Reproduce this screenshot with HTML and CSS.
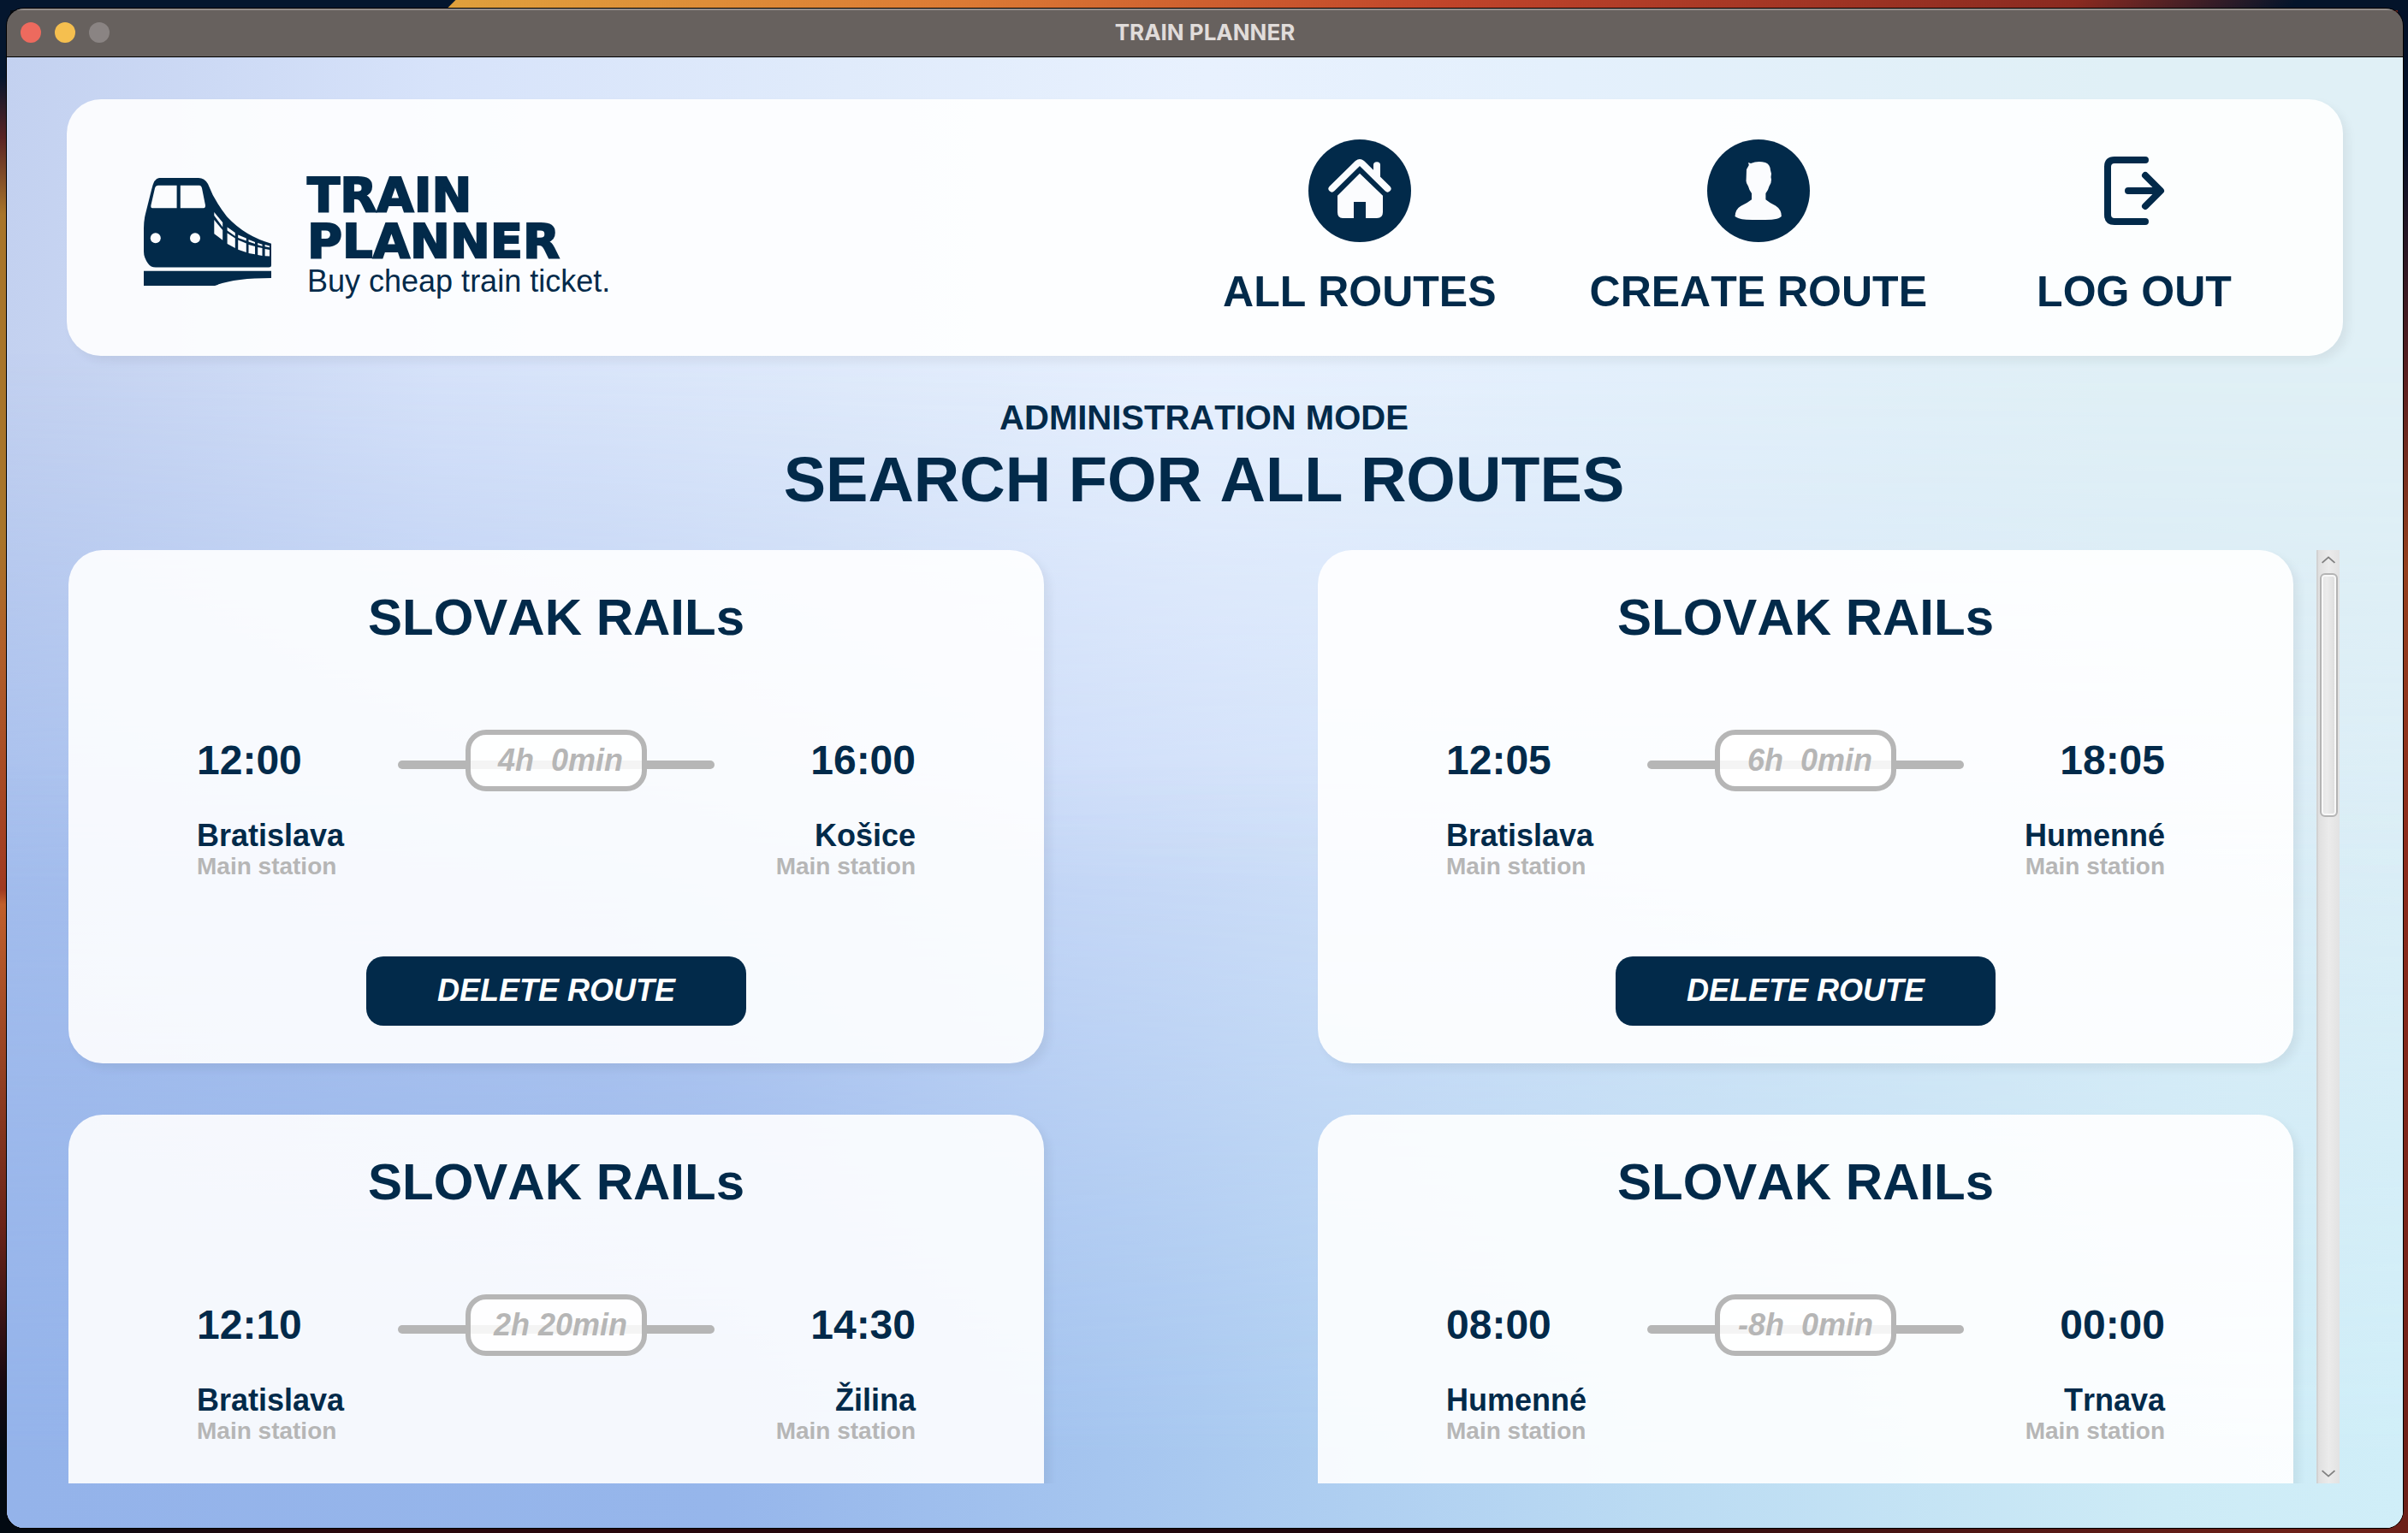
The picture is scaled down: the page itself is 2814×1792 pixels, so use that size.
FILE: index.html
```html
<!DOCTYPE html>
<html lang="en">
<head>
<meta charset="utf-8">
<meta name="viewport" content="width=device-width, initial-scale=1">
<title>TRAIN PLANNER</title>
<link rel="stylesheet" href="styles.css">
</head>
<body>
<div class="window">
  <div class="titlebar">
    <div class="lights">
      <button class="light light-close" aria-label="Close"></button>
      <button class="light light-minimise" aria-label="Minimise"></button>
      <button class="light light-zoom" aria-label="Zoom" disabled></button>
    </div>
    <span class="titlebar-text">TRAIN PLANNER</span>
  </div>

  <div class="app">
    <header class="header">
      <div class="brand">
        <svg class="brand-logo" viewBox="0 0 149 148" aria-hidden="true">
          <g transform="translate(0 7)">
            <path class="ink" d="M18 0H64Q71 0 75 7Q82 26 97 45Q118 68 149 76.700V102Q149 104.500 146 104.500H14Q8 104.500 5 100Q0 93 0 86V59Q0 50 2 42L9 14Q12 0 18 0Z"/>
            <path class="ink" d="M0 108.700H149V117Q105 117 83 126H0Z"/>
            <path class="gap" d="M17 8.700H38.600V35.300H10Q8 35.300 8.400 32L13 12Q14 8.700 17 8.700ZM42.800 8.700H65Q67 8.700 68 12L72 32Q72 35.300 70 35.300H42.800Z"/>
            <circle class="gap" cx="13.800" cy="70.300" r="6"/>
            <circle class="gap" cx="60" cy="70.300" r="6"/>
            <path class="gap" d="M82.300 40L92.200 52V57.500L82.300 44ZM82.300 49L92.200 61V72.700L82.300 65.300ZM97.600 57.500L106.800 64V68L97.600 61.500ZM97.600 64.500L106.800 70.500V82L97.600 77ZM110.200 66.500L119.800 70.500V73.500L110.200 70ZM110.200 72.500L119.800 76.500V87L110.200 83.700ZM122.500 72L130 75V77L122.500 74.500ZM122.500 78L130 80V89.300L122.500 88ZM133.200 76L138.500 77.700V79.700L133.200 78.300ZM133.200 81L138.500 82V91L133.200 90ZM141.600 78L147 79.500V81.300L141.600 80.300ZM141.600 83L147 84V91.500L141.600 91.300Z"/>
          </g>
        </svg>
        <div class="brand-text">
          <div class="brand-name">TRAIN<br>PLANNER</div>
          <div class="brand-tagline">Buy cheap train ticket.</div>
        </div>
      </div>

      <nav class="nav">
        <a class="nav-item" href="#routes">
          <svg class="nav-icon" viewBox="0 0 120 120" aria-hidden="true">
            <circle class="ink" cx="60" cy="60" r="60"/>
            <path class="gap-line" d="M27.500 57.500L57.500 28Q60 26 62.500 28L92.500 57.500"/>
            <path class="gap" d="M76 36V30Q76 26.300 80 26.300T84 30V48L76 40Z"/>
            <path class="gap" d="M60 39.700L87 65.700V85Q87 92 80 92H67V73H53V92H40Q34 92 34 85V65.700Z"/>
          </svg>
          <span class="nav-label">ALL ROUTES</span>
        </a>
        <a class="nav-item" href="#create">
          <svg class="nav-icon" viewBox="0 0 120 120" aria-hidden="true">
            <circle class="ink" cx="60" cy="60" r="60"/>
            <path class="gap" d="M48 27L51 28Q59 24.500 68 27Q73.500 29 74 36L75 40L74.500 44L75 47Q75 52 72.500 54.700Q71.500 59 68.400 63V70.300Q74 75 80 77.500Q87 82 86.800 90Q84 93 75.400 93.700Q60 94.500 45.600 93.700Q36 93 32.500 90Q33 81 40 77.500Q46 75 52 70.300V63Q49 59 48 54.700Q45 51 45.600 47L46 35L48.800 30Z"/>
          </svg>
          <span class="nav-label">CREATE ROUTE</span>
        </a>
        <a class="nav-item" href="#logout">
          <svg class="nav-icon" viewBox="0 0 120 120" aria-hidden="true">
            <path class="ink-line" d="M73 24H37Q29 24 29 32V88Q29 96 37 96H73M53 60H90M73 42L91 60L73 78"/>
          </svg>
          <span class="nav-label">LOG OUT</span>
        </a>
      </nav>
    </header>

    <main class="main">
      <div class="heading">
        <p class="heading-mode">ADMINISTRATION MODE</p>
        <h1 class="heading-title">SEARCH FOR ALL ROUTES</h1>
      </div>

      <div class="results">
        <div class="routes" id="routes">
          <article class="card">
            <h2 class="card-title">SLOVAK RAILs</h2>
            <div class="journey">
              <span class="time">12:00</span>
              <span class="track"><span class="duration"> 4h  0min</span></span>
              <span class="time">16:00</span>
            </div>
            <div class="stops">
              <div class="stop"><div class="city">Bratislava</div><div class="station">Main station</div></div>
              <div class="stop stop-end"><div class="city">Košice</div><div class="station">Main station</div></div>
            </div>
            <button class="delete">DELETE ROUTE</button>
          </article>
          <article class="card">
            <h2 class="card-title">SLOVAK RAILs</h2>
            <div class="journey">
              <span class="time">12:05</span>
              <span class="track"><span class="duration"> 6h  0min</span></span>
              <span class="time">18:05</span>
            </div>
            <div class="stops">
              <div class="stop"><div class="city">Bratislava</div><div class="station">Main station</div></div>
              <div class="stop stop-end"><div class="city">Humenné</div><div class="station">Main station</div></div>
            </div>
            <button class="delete">DELETE ROUTE</button>
          </article>
          <article class="card">
            <h2 class="card-title">SLOVAK RAILs</h2>
            <div class="journey">
              <span class="time">12:10</span>
              <span class="track"><span class="duration"> 2h 20min</span></span>
              <span class="time">14:30</span>
            </div>
            <div class="stops">
              <div class="stop"><div class="city">Bratislava</div><div class="station">Main station</div></div>
              <div class="stop stop-end"><div class="city">Žilina</div><div class="station">Main station</div></div>
            </div>
            <button class="delete">DELETE ROUTE</button>
          </article>
          <article class="card">
            <h2 class="card-title">SLOVAK RAILs</h2>
            <div class="journey">
              <span class="time">08:00</span>
              <span class="track"><span class="duration">-8h  0min</span></span>
              <span class="time">00:00</span>
            </div>
            <div class="stops">
              <div class="stop"><div class="city">Humenné</div><div class="station">Main station</div></div>
              <div class="stop stop-end"><div class="city">Trnava</div><div class="station">Main station</div></div>
            </div>
            <button class="delete">DELETE ROUTE</button>
          </article>
        </div>
        <div class="scrollbar" aria-hidden="true">
          <svg class="scroll-arrow" viewBox="0 0 27 27"><path d="M5 15L13 8L21 15"/></svg>
          <div class="scroll-lane"><div class="scroll-thumb"></div></div>
          <svg class="scroll-arrow" viewBox="0 0 27 27"><path d="M5 12L13 19L21 12"/></svg>
        </div>
      </div>
    </main>
  </div>
</div>
</body>
</html>
```
FILE: styles.css
```css
:root {
  --navy: #022a4a;
  --grey: #b6b6b6;
  --panel: rgba(255, 255, 255, 0.9);
  --shadow: 6px 6px 12px rgba(0, 0, 0, 0.06);
}

* {
  box-sizing: border-box;
}

body {
  margin: 0;
  height: 100vh;
  padding: 10px 6px 6px 8px;
  font-family: "Liberation Sans", Arial, sans-serif;
  font-kerning: none;
  color: var(--navy);
  background:
    linear-gradient(135deg, #04162e 376px, #e0a03c 377px, #dc7a34 40%, #c0442a 60%, #8a2a20 86%, #04142a 95%) top / 100% 12px no-repeat,
    linear-gradient(#04162e 0 5%, #5a2424 9%, #a8752a 14% 35%, #b0602a 42%, #a03a20 58%, #c0602c 59%, #6a2418 80%, #1a0a12 90%, #020a12 95%) left / 12px 100% no-repeat,
    linear-gradient(#021028 0 9%, #5c2020 25%, #94401e 37%, #8c2c1c 55%, #6c2018) right / 12px 100% no-repeat,
    linear-gradient(90deg, #020a12, #2a080c 15%, #1c060c 60%, #6c2018 95%);
}

.window {
  height: 100%;
  display: flex;
  flex-direction: column;
  overflow: hidden;
  border-radius: 20px;
  box-shadow: 0 0 0 1px #000;
}

.titlebar {
  flex: none;
  display: grid;
  grid-template-columns: 1fr auto 1fr;
  align-items: center;
  height: 57px;
  padding: 0 16px 2px;
  background: #67615e;
  border-top: 2px solid #938d8a;
  border-bottom: 1px solid #000;
}

.lights {
  display: flex;
  gap: 16px;
}

.light {
  width: 24px;
  height: 24px;
  padding: 0;
  border: 0;
  border-radius: 50%;
}

.light-close { background: #ed6a5e; }
.light-minimise { background: #f5bf4f; }
.light-zoom { background: #8a8483; }

.titlebar-text {
  font: 700 26px/32px Inter, sans-serif;
  color: #e0dcda;
}

/* The backdrop blends three horizontal colour bands from top to bottom. */
.app {
  position: relative;
  z-index: 0;
  flex: 1;
  min-height: 0;
  display: flex;
  flex-direction: column;
  padding: 49px 70px 52px;
  background: linear-gradient(90deg, #c3d1f0, #d7e3fa 18%, #e0ebfb 35%, #e8f1fe 50%, #e4f0fc 65%, #e0f0f6 88%);
}

.app::before,
.app::after {
  content: "";
  position: absolute;
  inset: 0;
  z-index: -1;
}

.app::before {
  background: linear-gradient(90deg, #a5beed, #b4c9f1 25%, #cbdbf8 45%, #d2e1f9 55%, #d6e8f8 80%, #dceef6);
  mask-image: linear-gradient(transparent 20%, #000 56%);
}

.app::after {
  background: linear-gradient(90deg, #94b3ea, #96b6eb 30%, #a9c9f0 50%, #bcdcf3 70%, #cdebf6 90%, #d0eef8);
  mask-image: linear-gradient(transparent 48%, #000 95%);
}

.header {
  flex: none;
  display: flex;
  justify-content: space-between;
  align-items: flex-start;
  min-height: 300px;
  padding: 47px 111px 38px 90px;
  border-radius: 40px;
  background: var(--panel);
  box-shadow: var(--shadow);
}

.brand {
  display: flex;
  gap: 42px;
  padding-top: 38px;
}

.brand-logo {
  width: 149px;
  height: 148px;
}

.brand-name {
  font: 700 56px/54px "DejaVu Sans", "Arial Black", sans-serif;
  -webkit-text-stroke: 2px var(--navy);
}

.brand-tagline {
  font-size: 36px;
  line-height: 40px;
  font-kerning: normal;
}

.ink { fill: var(--navy); }
.gap { fill: #fbfcfe; }

.ink-line,
.gap-line {
  fill: none;
  stroke-width: 8px;
  stroke-linecap: round;
  stroke-linejoin: round;
}

.ink-line { stroke: var(--navy); }
.gap-line { stroke: #fbfcfe; }

.nav {
  display: flex;
  gap: 109px;
}

.nav-item {
  display: flex;
  flex-direction: column;
  align-items: center;
  gap: 28px;
  min-width: 266px;
  color: inherit;
  text-decoration: none;
}

.nav-icon {
  width: 120px;
  height: 120px;
}

.nav-label {
  font-size: 50px;
  line-height: 60px;
  font-weight: 700;
}

.main {
  flex: 1;
  min-height: 0;
  display: flex;
  flex-direction: column;
  padding: 48px 4px 0 2px;
}

.heading {
  margin-bottom: 33px;
  text-align: center;
}

.heading-mode {
  margin: 0;
  font-size: 40px;
  line-height: 48px;
  font-weight: 700;
}

.heading-title {
  margin: 0;
  font-size: 74px;
  line-height: 98px;
}

.results {
  flex: 1;
  min-height: 0;
  display: flex;
}

.routes {
  flex: 1;
  display: grid;
  grid-template-columns: 1fr 1fr;
  grid-auto-rows: max-content;
  gap: 60px 320px;
  padding-right: 27px;
  overflow-y: auto;
  scrollbar-width: none;
}

.card {
  display: flex;
  flex-direction: column;
  padding: 43px 150px 44px;
  border-radius: 40px;
  background: var(--panel);
  box-shadow: var(--shadow);
}

.card-title {
  margin: 0 0 95px;
  font-size: 60px;
  line-height: 72px;
  text-align: center;
}

.journey {
  display: flex;
  justify-content: space-between;
  align-items: center;
  margin-bottom: 32px;
}

.time {
  font-size: 48px;
  line-height: 56px;
  font-weight: 700;
}

.track {
  position: relative;
  z-index: 0;
  display: flex;
  justify-content: center;
  width: 370px;
}

.track::before {
  content: "";
  position: absolute;
  top: 50%;
  left: 0;
  right: 0;
  z-index: -1;
  height: 10px;
  border-radius: 5px;
  background: var(--grey);
}

.duration {
  width: 212px;
  height: 72px;
  border: 6px solid var(--grey);
  border-radius: 24px;
  background: rgba(255, 255, 255, 0.85);
  background-clip: padding-box;
  color: var(--grey);
  font-size: 36px;
  line-height: 60px;
  font-weight: 700;
  font-style: italic;
  text-align: center;
  white-space: pre;
}

.stops {
  display: flex;
  justify-content: space-between;
  margin-bottom: 89px;
}

.stop-end {
  text-align: right;
}

.city {
  font-size: 36px;
  line-height: 40px;
  font-weight: 700;
}

.station {
  font-size: 28px;
  line-height: 32px;
  font-weight: 700;
  color: var(--grey);
}

.delete {
  align-self: center;
  padding: 20px 83px 21px;
  border: 0;
  border-radius: 20px;
  background: var(--navy);
  color: #fff;
  font: italic 700 36px/40px "Liberation Sans", Arial, sans-serif;
  font-kerning: none;
}

.scrollbar {
  flex: none;
  display: flex;
  flex-direction: column;
  width: 27px;
  border-left: 2px solid #d2d2d2;
  background: linear-gradient(90deg, #dfdfdf, #ebebeb 50%, #e2e2e2);
}

.scroll-arrow {
  flex: none;
  width: 25px;
  height: 27px;
}

.scroll-arrow path {
  fill: none;
  stroke: #808080;
  stroke-width: 2px;
}

.scroll-lane {
  flex: 1;
  padding: 0 2px;
}

.scroll-thumb {
  height: 27.5%;
  border: 2px solid #b4b4b4;
  border-radius: 6px;
  background: linear-gradient(90deg, #e4e4e4, #ececec 35%, #dcdcdc);
  box-shadow: inset 0 0 0 2px #f8f8f8;
}
```
